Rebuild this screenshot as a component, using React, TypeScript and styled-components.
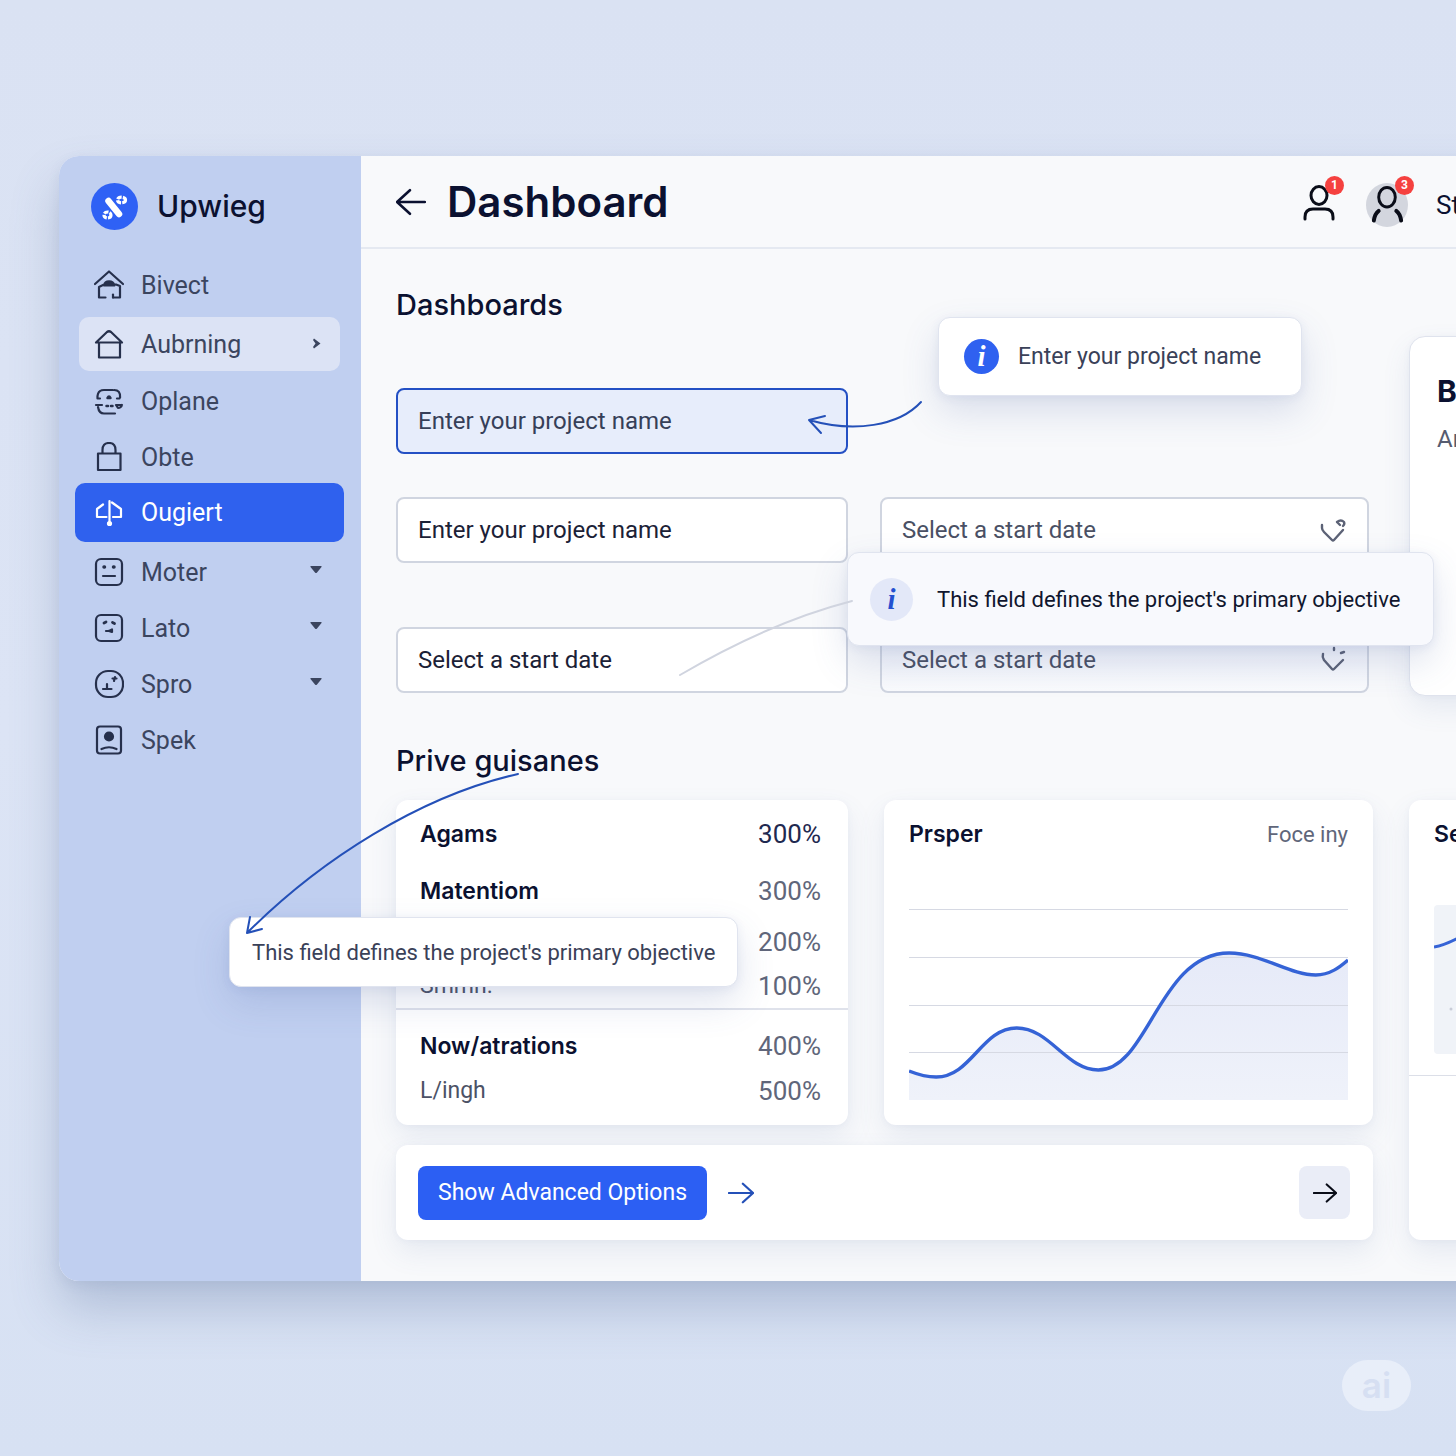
import React from "react";
import styled, { createGlobalStyle, css } from "styled-components";

const GlobalStyle = createGlobalStyle`
  *, *::before, *::after { box-sizing: border-box; }
  body {
    margin: 0;
    font-family: Roboto, "Liberation Sans", sans-serif;
    color: #0b1130;
    background: #dbe3f4;
  }
  button, input, select { font: inherit; color: inherit; }
  h1, h2, h3, p { margin: 0; font-weight: inherit; }
`;

const display = css`
  font-family: Inter, "Liberation Sans", sans-serif;
`;

const Page = styled.div`
  min-height: 100vh;
  padding: 156px 0 44px 59px;
  overflow: hidden;
  background: linear-gradient(#dae2f3, #dce4f5 50%, #d7e1f3);
`;

/* The window runs past the right edge of the page. */
const AppWindow = styled.div`
  display: grid;
  grid-template-columns: 302px minmax(0, 1fr);
  margin-right: -278px;
  border-radius: 20px;
  background: #f8f9fb;
  box-shadow: 0 28px 48px rgba(90, 112, 155, 0.3), 0 4px 12px rgba(90, 112, 155, 0.1);
`;

const Sidebar = styled.aside`
  padding: 26px 17px 24px 16px;
  border-radius: 20px 0 0 20px;
  background: #c0cff0;
`;

const Brand = styled.div`
  ${display}
  display: flex;
  align-items: center;
  gap: 19px;
  height: 48px;
  margin-bottom: 27px;
  padding-left: 16px;
  font-size: 30px;
  font-weight: 500;
`;

const Nav = styled.nav`
  display: flex;
  flex-direction: column;
`;

const NavItem = styled.a<{ $state?: "hover" | "active" }>`
  display: flex;
  align-items: center;
  gap: 17px;
  height: 56px;
  padding: 0 20px 0 19px;
  border-radius: 10px;
  font-size: 25px;
  color: #3b455f;
  text-decoration: none;
  ${(p) =>
    p.$state === "hover" &&
    css`
      height: 54px;
      margin: 4px 4px 2px;
      padding: 0 16px 0 15px;
      background: #dce3f5;
    `}
  ${(p) =>
    p.$state === "active" &&
    css`
      height: 59px;
      margin: -2px 0 2px;
      color: #fff;
      background: #2f61ee;
    `}
`;

const NavLabel = styled.span`
  flex: 1;
`;

const NavIcon = styled.svg<{ $light?: boolean }>`
  flex: none;
  width: 30px;
  height: 30px;
  fill: none;
  stroke: ${(p) => (p.$light ? "#fff" : "#26304c")};
  stroke-width: 2.2;
  stroke-linecap: round;
  stroke-linejoin: round;
`;

const Caret = styled.svg`
  flex: none;
  width: 16px;
  height: 16px;
  margin-bottom: 4px;
  fill: #3b455f;
`;

const Main = styled.main`
  min-width: 0;
`;

const TopBar = styled.header`
  display: flex;
  align-items: center;
  height: 93px;
  padding-left: 35px;
  border-bottom: 2px solid #e5e9f1;
`;

const TitleGroup = styled.div`
  display: flex;
  flex: 1;
  align-items: center;
  gap: 21px;
`;

const IconButton = styled.button`
  display: grid;
  place-items: center;
  padding: 0;
  border: 0;
  background: none;
  cursor: pointer;
`;

const PageTitle = styled.h1`
  ${display}
  font-size: 42px;
  line-height: 48px;
  font-weight: 600;
`;

const Actions = styled.div`
  display: flex;
  flex: none;
  align-items: center;
  width: 432px;
  gap: 28px;
  padding-top: 6px;
  font-size: 26px;
`;

const Account = styled.button<{ $filled?: boolean }>`
  position: relative;
  display: grid;
  place-items: center;
  width: ${(p) => (p.$filled ? 42 : 36)}px;
  height: 44px;
  padding: 0;
  border: 0;
  border-radius: 50%;
  background: ${(p) => (p.$filled ? "#d3d6de" : "none")};
`;

const Count = styled.span`
  position: absolute;
  top: -7px;
  right: -6px;
  width: 19px;
  height: 19px;
  border-radius: 50%;
  font-size: 12px;
  line-height: 19px;
  font-weight: 700;
  text-align: center;
  color: #fff;
  background: #f5413f;
`;

const Content = styled.div`
  display: flex;
  flex-direction: column;
  gap: 45px;
  padding: 36px 35px 41px;
`;

const Section = styled.section`
  display: grid;
  grid-template-columns: minmax(0, 977fr) minmax(0, 290fr);
  column-gap: 36px;
`;

const SectionTitle = styled.h2<{ $gap: number }>`
  ${display}
  margin-bottom: ${(p) => p.$gap}px;
  font-size: 29px;
  line-height: 40px;
  font-weight: 500;
`;

const Form = styled.form`
  display: grid;
  gap: 43px;
  padding-right: 4px;
`;

const FieldRow = styled.div<{ $spaced?: boolean }>`
  display: grid;
  grid-template-columns: minmax(0, 452fr) minmax(0, 489fr);
  gap: 32px;
  margin-top: ${(p) => (p.$spaced ? 21 : 0)}px;
`;

const Field = styled.div`
  position: relative;
`;

const control = css`
  display: block;
  width: 100%;
  height: 66px;
  padding: 0 20px;
  border: 2px solid #d0d5e0;
  border-radius: 8px;
  outline: 0;
  font-size: 24px;
  background: #fff;
`;

const TextInput = styled.input<{ $focused?: boolean }>`
  ${control}
  &::placeholder { color: #1b2136; opacity: 1; }
  ${(p) =>
    p.$focused &&
    css`
      border-color: #2450c4;
      background: #e7edfb;
      &::placeholder { color: #363f58; }
    `}
`;

const Select = styled.select<{ $shaded?: boolean }>`
  ${control}
  appearance: none;
  color: #4a5064;
  background: ${(p) => (p.$shaded ? "linear-gradient(#eceff8, #fafbfd)" : "#fff")};
`;

const SelectMark = styled.svg`
  position: absolute;
  top: 19px;
  right: 22px;
  width: 28px;
  height: 28px;
  fill: none;
  stroke: #5c6276;
  stroke-width: 2.4;
  stroke-linecap: round;
  pointer-events: none;
`;

const Tooltip = styled.div`
  position: absolute;
  z-index: 3;
  display: flex;
  align-items: center;
  border: 1px solid #e0e4ef;
  border-radius: 12px;
  font-size: 22px;
  white-space: nowrap;
  color: #3a4158;
  background: #fff;
  box-shadow: 0 16px 36px rgba(70, 95, 160, 0.17), 0 2px 10px rgba(70, 95, 160, 0.08);
`;

const NameTip = styled(Tooltip)`
  top: -71px;
  left: calc(100% + 90px);
  gap: 19px;
  height: 79px;
  padding: 0 40px 0 25px;
  font-size: 23px;
`;

const DateTip = styled(Tooltip)`
  top: 55px;
  left: -33px;
  gap: 24px;
  height: 94px;
  padding: 0 33px 0 22px;
  color: #10162e;
  background: #f8f9fd;
`;

const TableTip = styled(Tooltip)`
  top: 117px;
  left: -167px;
  height: 70px;
  padding: 0 22px;
`;

const InfoMark = styled.span<{ $soft?: boolean }>`
  width: ${(p) => (p.$soft ? 43 : 35)}px;
  height: ${(p) => (p.$soft ? 43 : 35)}px;
  border-radius: 50%;
  font: italic 700 29px "Liberation Serif", serif;
  line-height: ${(p) => (p.$soft ? 43 : 35)}px;
  text-align: center;
  color: ${(p) => (p.$soft ? "#2450d0" : "#fff")};
  background: ${(p) => (p.$soft ? "#e3e8f8" : "#2f61f0")};
`;

const Pointer = styled.svg`
  position: absolute;
  z-index: 4;
  overflow: visible;
  fill: none;
  stroke: #2450b8;
  stroke-width: 2;
  stroke-linecap: round;
  stroke-linejoin: round;
  pointer-events: none;
`;

const NamePointer = styled(Pointer)`
  top: 10px;
  left: calc(100% - 44px);
`;

const DatePointer = styled(Pointer)`
  top: -33px;
  left: calc(100% - 172px);
  stroke: #d0d4df;
`;

const TablePointer = styled(Pointer)`
  top: -30px;
  left: -156px;
`;

const Card = styled.div`
  position: relative;
  border-radius: 12px;
  background: #fff;
  box-shadow: 0 12px 28px rgba(80, 105, 165, 0.11), 0 1px 6px rgba(80, 105, 165, 0.05);
`;

const NoteCard = styled(Card)`
  min-height: 360px;
  margin-top: 51px;
  padding: 34px 27px;
  border: 1px solid #dfe3ed;
  border-radius: 16px;
`;

const NoteTitle = styled.h3`
  ${display}
  font-size: 30px;
  line-height: 40px;
  font-weight: 700;
`;

const NoteText = styled.p`
  margin-top: 12px;
  font-size: 24px;
  line-height: 32px;
  color: #565c70;
`;

const Stack = styled.div`
  display: grid;
  gap: 20px;
`;

const CardRow = styled.div`
  display: grid;
  grid-template-columns: minmax(0, 452fr) minmax(0, 489fr);
  gap: 36px;
`;

const TableCard = styled(Card)`
  padding: 5px 0 11px;
`;

const Table = styled.table`
  width: 100%;
  border-collapse: collapse;
  font-size: 23px;
  line-height: 32px;
`;

const Group = styled.tbody`
  & + & { border-top: 2px solid #dfe2eb; }
  & + & tr:first-child > * { padding-top: 14px; }
`;

const Row = styled.tr<{ $height: number }>`
  height: ${(p) => p.$height}px;
`;

const Name = styled.th<{ $muted?: boolean }>`
  padding: 0 0 0 24px;
  text-align: left;
  font-weight: 400;
  color: #4c5266;
  ${(p) =>
    !p.$muted &&
    css`
      ${display}
      font-weight: 600;
      color: #0b1130;
    `}
`;

const Value = styled.td<{ $strong?: boolean }>`
  padding: 0 27px 0 0;
  font-size: 26px;
  text-align: right;
  color: ${(p) => (p.$strong ? "#1f2950" : "#60667a")};
`;

const ChartCard = styled(Card)`
  padding: 14px 25px 24px;
`;

const CardHead = styled.div`
  display: flex;
  align-items: center;
  justify-content: space-between;
  height: 40px;
  font-size: 22px;
  color: #60667a;
`;

const CardTitle = styled.h3`
  ${display}
  font-size: 23px;
  font-weight: 600;
  color: #0b1130;
`;

const Chart = styled.svg`
  display: block;
  width: 100%;
  height: 193px;
  margin-top: 54px;
`;

const ActionBar = styled(Card)`
  display: flex;
  align-items: center;
  gap: 21px;
  height: 95px;
  padding: 0 23px 0 22px;
`;

const PrimaryButton = styled.button`
  height: 54px;
  padding: 0 20px;
  border: 0;
  border-radius: 8px;
  font-size: 23px;
  color: #fff;
  background: #2c5ff3;
`;

const NextButton = styled(IconButton)`
  width: 51px;
  height: 53px;
  margin-left: auto;
  border-radius: 8px;
  background: #eaedf7;
`;

const LineIcon = styled.svg<{ $color: string }>`
  display: block;
  fill: none;
  stroke: ${(p) => p.$color};
  stroke-width: 2.4;
  stroke-linecap: round;
  stroke-linejoin: round;
`;

const SideCard = styled(Card)`
  margin-top: 59px;
  padding-top: 14px;
`;

const SideBody = styled.div`
  padding: 0 25px 21px;
  border-bottom: 1px solid #dcdfe8;
`;

const SideChart = styled.svg`
  display: block;
  width: 100%;
  height: 149px;
  margin-top: 51px;
  border-radius: 4px;
  background: #f0f3f8;
`;

const Footer = styled.footer`
  display: flex;
  justify-content: flex-end;
  padding: 79px 45px 0 0;
`;

const Mark = styled.span`
  ${display}
  width: 69px;
  height: 51px;
  border-radius: 26px;
  font-size: 35px;
  line-height: 50px;
  font-weight: 600;
  text-align: center;
  color: #d6dff2;
  background: #e8eef9;
`;

const NAV = [
  {
    label: "Bivect",
    icon: (
      <>
        <path d="M1 14 15 1.500 29 14M5 17v10.500h6.500M5 17l4-2M19 27.500h7V16l-4-1.500" />
        <path d="M10 15.500c1-5.500 9-5.500 10.500 0z" fill="#26304c" />
        <path d="M19 27.500v-3" />
      </>
    ),
  },
  {
    label: "Aubrning",
    state: "hover" as const,
    caret: "right",
    icon: <path d="M2 13.500 13 3q2-1.500 4 0l11 10.500M3 13.500h24M5 13.500v15h21v-15" />,
  },
  {
    label: "Oplane",
    icon: (
      <>
        <path d="M6 12.500H3.500Q3 4 10 4h10q7 0 6 8.500h-3" strokeDasharray="11 1.500" />
        <path d="M2 19h6M4 21q1 6.500 6 6.500h11M28 19h-6l2 3q3 0 4-3" />
        <path d="M13.500 12q1.500-3 3 0zM12.500 20h1.500M17 20h1.500" strokeWidth="2.500" />
      </>
    ),
  },
  {
    label: "Obte",
    icon: <path d="M4 11.500h22.500v16.500H4zM8.500 11V8q0-7 6.500-7t6.500 7v3" />,
  },
  {
    label: "Ougiert",
    state: "active" as const,
    icon: (
      <>
        <path d="M15.500 3v22M9 6.500l-6 4.500v8h9.500M18 4.500 27 11v8h-8" />
        <circle cx="15.500" cy="25.500" r="1.500" fill="#fff" />
      </>
    ),
  },
  {
    label: "Moter",
    caret: "down",
    icon: (
      <>
        <rect x="2" y="2" width="26" height="26" rx="5" />
        <path d="M10 10h.5M19.500 10h.5" strokeWidth="3.500" />
        <path d="M9 19h12" />
      </>
    ),
  },
  {
    label: "Lato",
    caret: "down",
    icon: (
      <>
        <rect x="2" y="2" width="26" height="26" rx="5" />
        <path d="M10 10l2-1M18.500 9.500l2 1" strokeWidth="2.800" />
        <path d="M12 18h3l3-1.500v2.500l-3-1" />
      </>
    ),
  },
  {
    label: "Spro",
    caret: "down",
    icon: (
      <>
        <rect x="2" y="2" width="27" height="26" rx="12" />
        <path d="M9 20h8.500M13 15v5M18.500 9.500h4M21 8l-1 4" />
      </>
    ),
  },
  {
    label: "Spek",
    icon: (
      <>
        <rect x="3" y="1.500" width="24" height="27" rx="3" />
        <circle cx="15" cy="11.500" r="4" fill="#26304c" />
        <path d="M7.500 24q7.500-3.500 15 0" />
      </>
    ),
  },
];

const Arrow = ({ color, size, back }: { color: string; size: number; back?: boolean }) => (
  <LineIcon $color={color} width={size} height={size} viewBox="0 0 28 28" aria-hidden="true">
    <path d={back ? "M27 14H1M13 3 1 14l12 11" : "M1 14h26M16 4l11 10-11 10"} />
  </LineIcon>
);

const Logo = () => (
  <svg width="47" height="47" viewBox="0 0 47 47" aria-hidden="true">
    <circle cx="23.500" cy="23.500" r="23.500" fill="#2f61f5" />
    <path d="M17.500 18 28 31" stroke="#fff" strokeWidth="6.500" strokeLinecap="round" />
    <g fill="none" stroke="#fff" strokeWidth="3.200">
      <ellipse cx="30.500" cy="17" rx="4" ry="2.800" strokeDasharray="4.500 1.200" />
      <ellipse cx="16.500" cy="32" rx="3.500" ry="3" strokeDasharray="4.500 1.200" />
    </g>
  </svg>
);

const curve =
  "M0 162C10 166 18 168 27 168C62 168 72 119 107 119C140 119 156 161 188 161C238 161 248 44 318 44C350 44 378 66 404 66C418 66 428 58 436 51";

export default function App() {
  return (
    <Page>
      <GlobalStyle />
      <AppWindow>
        <Sidebar>
          <Brand>
            <Logo />
            Upwieg
          </Brand>
          <Nav aria-label="Main">
            {NAV.map((item) => (
              <NavItem key={item.label} href="#" $state={item.state}>
                <NavIcon viewBox="0 0 30 30" $light={item.state === "active"} aria-hidden="true">
                  {item.icon}
                </NavIcon>
                <NavLabel>{item.label}</NavLabel>
                {item.caret && (
                  <Caret viewBox="0 0 16 16" aria-hidden="true">
                    <path
                      d={
                        item.caret === "right"
                          ? "M6 4.500 12.500 9.500 6 14.500 5 13l2.500-3.500L5 6z"
                          : "M3 4h10q1 0 .5 1L9 10.500q-1 1-2 0L2.500 5Q2 4 3 4z"
                      }
                    />
                  </Caret>
                )}
              </NavItem>
            ))}
          </Nav>
        </Sidebar>

        <Main>
          <TopBar>
            <TitleGroup>
              <IconButton type="button" aria-label="Back">
                <Arrow color="#0b1130" size={30} back />
              </IconButton>
              <PageTitle>Dashboard</PageTitle>
            </TitleGroup>
            <Actions>
              <Account type="button" aria-label="Requests">
                <LineIcon $color="#0a0d18" width="36" height="44" viewBox="0 0 36 44">
                  <ellipse cx="17" cy="12.500" rx="8" ry="9" strokeWidth="3" />
                  <path d="M3 36v-2q0-8 8-8h12q8 0 8 8v2" strokeWidth="3" />
                </LineIcon>
                <Count>1</Count>
              </Account>
              <Account type="button" aria-label="Profile" $filled>
                <LineIcon $color="#0a0d18" width="42" height="44" viewBox="0 0 43 44">
                  <ellipse cx="21.500" cy="14" rx="8.500" ry="10" strokeWidth="3" />
                  <path d="M13 28q-4 3-5 10M31 28q4 3 5 10" strokeWidth="4" />
                </LineIcon>
                <Count>3</Count>
              </Account>
              <span>Sta</span>
            </Actions>
          </TopBar>

          <Content>
            <Section>
              <div>
                <SectionTitle $gap={63}>Dashboards</SectionTitle>
                <Form>
                  <FieldRow>
                    <Field>
                      <TextInput aria-label="Project name" placeholder="Enter your project name" $focused />
                      <NamePointer width="120" height="42" viewBox="0 0 120 42" aria-hidden="true">
                        <path d="M117 4C95 28 50 35 5 22M21 18 5 22l12 13" />
                      </NamePointer>
                      <NameTip role="tooltip">
                        <InfoMark>i</InfoMark>
                        Enter your project name
                      </NameTip>
                    </Field>
                  </FieldRow>
                  <FieldRow>
                    <Field>
                      <TextInput aria-label="Second project name" placeholder="Enter your project name" />
                    </Field>
                    <Field>
                      <Select aria-label="Start date">
                        <option>Select a start date</option>
                      </Select>
                      <SelectMark viewBox="0 0 28 28" aria-hidden="true">
                        <path d="M3 9v3q0 2 2 4l8 8q1 1 2 0l9-10M18 6q4-3 7 0 1 2-1 4M18 6l3 3" />
                      </SelectMark>
                      <DateTip role="tooltip">
                        <InfoMark $soft>i</InfoMark>
                        This field defines the project's primary objective
                      </DateTip>
                    </Field>
                  </FieldRow>
                  <FieldRow $spaced>
                    <Field>
                      <TextInput aria-label="Project start date" placeholder="Select a start date" />
                      <DatePointer width="180" height="86" viewBox="0 0 180 86" aria-hidden="true">
                        <path d="M4 81C50 54 110 24 176 7" />
                      </DatePointer>
                    </Field>
                    <Field>
                      <Select aria-label="Second start date" $shaded>
                        <option>Select a start date</option>
                      </Select>
                      <SelectMark viewBox="0 0 28 28" aria-hidden="true">
                        <path d="M4 8q-1 3 1 6l8 9q1 1 2 0l9-9M15 2v2M22 7l3-1" />
                      </SelectMark>
                    </Field>
                  </FieldRow>
                </Form>
              </div>
              <NoteCard>
                <NoteTitle>B</NoteTitle>
                <NoteText>An</NoteText>
              </NoteCard>
            </Section>

            <Section>
              <div>
                <SectionTitle $gap={19}>Prive guisanes</SectionTitle>
                <Stack>
                  <CardRow>
                    <TableCard>
                      <Table>
                        <Group>
                          <Row $height={57}>
                            <Name scope="row">Agams</Name>
                            <Value $strong>300%</Value>
                          </Row>
                          <Row $height={57}>
                            <Name scope="row">Matentiom</Name>
                            <Value>300%</Value>
                          </Row>
                          <Row $height={45}>
                            <Name scope="row" />
                            <Value>200%</Value>
                          </Row>
                          <Row $height={45}>
                            <Name scope="row" $muted>Smmn.</Name>
                            <Value>100%</Value>
                          </Row>
                        </Group>
                        <Group>
                          <Row $height={59}>
                            <Name scope="row">Now/atrations</Name>
                            <Value>400%</Value>
                          </Row>
                          <Row $height={45}>
                            <Name scope="row" $muted>L/ingh</Name>
                            <Value>500%</Value>
                          </Row>
                        </Group>
                      </Table>
                      <TableTip role="tooltip">This field defines the project's primary objective</TableTip>
                      <TablePointer width="284" height="170" viewBox="0 0 284 170" aria-hidden="true">
                        <path d="M278 4C180 26 80 90 7 163M10 147 7 163l15-4" />
                      </TablePointer>
                    </TableCard>
                    <ChartCard>
                      <CardHead>
                        <CardTitle>Prsper</CardTitle>
                        <span>Foce iny</span>
                      </CardHead>
                      <Chart viewBox="0 -1 436 193" preserveAspectRatio="none" role="img" aria-label="Prsper">
                        <defs>
                          <linearGradient id="area" x1="0" y1="0" x2="0" y2="1">
                            <stop offset="0" stopColor="#e6eaf8" />
                            <stop offset="1" stopColor="#eff2fa" />
                          </linearGradient>
                        </defs>
                        <path d={`${curve}V191H0Z`} fill="url(#area)" />
                        <path d="M0 .5H436M0 48.500H436M0 96.500H436M0 143.500H436" stroke="#d6d9e3" />
                        <path d={curve} fill="none" stroke="#3563d6" strokeWidth="3.400" />
                      </Chart>
                    </ChartCard>
                  </CardRow>
                  <ActionBar>
                    <PrimaryButton type="button">Show Advanced Options</PrimaryButton>
                    <IconButton type="button" aria-label="Open">
                      <Arrow color="#2450b8" size={26} />
                    </IconButton>
                    <NextButton type="button" aria-label="Next">
                      <Arrow color="#0a0d18" size={24} />
                    </NextButton>
                  </ActionBar>
                </Stack>
              </div>
              <SideCard>
                <SideBody>
                  <CardHead>
                    <CardTitle>Se</CardTitle>
                  </CardHead>
                  <SideChart viewBox="0 0 240 149" preserveAspectRatio="none" role="img" aria-label="Se">
                    <path d="M0 42C12 40 18 36 30 30S60 20 80 34S150 70 240 30" fill="none" stroke="#3563d6" strokeWidth="3" />
                    <circle cx="17" cy="104" r="1.500" fill="#c9cdd8" />
                  </SideChart>
                </SideBody>
              </SideCard>
            </Section>
          </Content>
        </Main>
      </AppWindow>
      <Footer>
        <Mark>ai</Mark>
      </Footer>
    </Page>
  );
}
